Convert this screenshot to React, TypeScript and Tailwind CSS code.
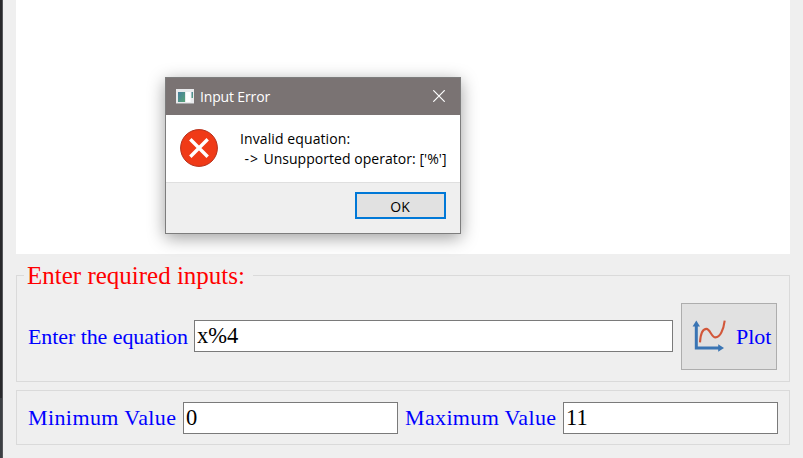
import React from "react";

function Field({ value, className }: { value: string; className: string }) {
  return (
    <input
      type="text"
      defaultValue={value}
      className={`h-8 rounded-none border border-[#7a7a7a] bg-white px-[2px] text-[22.5px] leading-none text-black outline-none ${className}`}
    />
  );
}

function PlotIcon() {
  return (
    <svg width="32" height="32" viewBox="0 0 32 32" fill="none" className="mb-[2px] shrink-0 overflow-visible">
      <path d="M4.3 6V28H27" stroke="#3a75b4" strokeWidth="3" />
      <path d="M4.3 0.5L8 6.5H0.6Z" fill="#3a75b4" />
      <path d="M32 28L26.2 31.7V24.3Z" fill="#3a75b4" />
      <path
        d="M8 22.4C8.5 14 11 8.9 14.5 8.9C18 8.9 19.5 17.4 23.5 17.4C28 17.4 31.5 10 32.7 .6"
        stroke="#d2573a"
        strokeWidth="2.1"
      />
    </svg>
  );
}

function AppIcon() {
  return (
    <svg width="18" height="15" viewBox="0 0 18 15">
      <defs>
        <linearGradient id="screen" x1="0" y1="0" x2="1" y2="1">
          <stop offset="0" stopColor="#477f9e" />
          <stop offset="1" stopColor="#58a477" />
        </linearGradient>
      </defs>
      <rect x="0" y="0" width="18" height="15" fill="#e9eaec" />
      <rect x="0" y="14" width="18" height="1" fill="#aaa9aa" />
      <rect x="2" y="3" width="7" height="10" fill="url(#screen)" />
      <rect x="10" y="3" width="4.5" height="10" fill="#fff" />
      <rect x="15.5" y="3" width="1.5" height="6" fill="url(#screen)" />
    </svg>
  );
}

function ErrorDialog() {
  return (
    <div
      role="dialog"
      className="absolute left-[165px] top-[77px] flex h-[157px] w-[296px] flex-col border border-[#7d7d7d] bg-white font-['Open_Sans',sans-serif] text-[14px] shadow-[0_4px_16px_rgba(0,0,0,0.38)]"
    >
      <div className="flex h-[37px] shrink-0 items-center bg-[#7a7373] pl-[10px] pr-[15px] text-white">
        <AppIcon />
        <span className="ml-[6px] grow whitespace-nowrap tracking-[-0.15px]">Input Error</span>
        <svg width="12" height="12" viewBox="0 0 12 12" stroke="white" strokeWidth="1.2" className="mb-px">
          <path d="M.3 .3L11.7 11.7M11.7 .3L.3 11.7" />
        </svg>
      </div>
      <div className="flex h-[67px] shrink-0 pl-[14px] pt-[14px] text-black">
        <svg width="38" height="38" viewBox="0 0 38 38" className="shrink-0">
          <circle cx="19" cy="19" r="18.4" fill="#f03a17" stroke="#b5301b" strokeWidth="1" />
          <path d="M10.3 10.3L27.7 27.7M27.7 10.3L10.3 27.7" stroke="white" strokeWidth="3.4" />
        </svg>
        <div className="ml-[22px] whitespace-pre leading-[20px]">
          <div className="tracking-[0.1px]">Invalid equation:</div>
          <div className="tracking-[0.04px]">
            <span className="tracking-[0.9px]">{" -> "}</span>
            {"Unsupported operator: ['%']"}
          </div>
        </div>
      </div>
      <div className="flex grow justify-end border-t border-[#dfdfdf] bg-[#efefef] pr-[14px] pt-[9px]">
        <button className="flex h-[27px] w-[91px] items-center justify-center border-2 border-[#0078d7] bg-[#e1e1e1] pr-px pt-px text-black">
          OK
        </button>
      </div>
    </div>
  );
}

export default function App() {
  return (
    <div className="relative flex h-[458px] w-[803px] overflow-hidden bg-[#efefef] font-['Liberation_Serif',serif]">
      <div className="flex w-[3px] shrink-0 flex-col border-r border-[#55565a] bg-[#28282b]">
        <div className="h-[398px]" />
        <div className="grow bg-[#3c3f43]" />
      </div>
      <main className="flex w-[787px] flex-col pl-[13px]">
        <div className="h-[254px] shrink-0 bg-white" />
        <section className="mt-[21px] flex h-[107px] shrink-0 flex-col border border-[#dadada]">
          <h2 className="-mt-[14px] ml-[7px] h-[27px] w-[229px] bg-[#efefef] pl-[3px] text-[25px] leading-[27px] whitespace-nowrap text-[#ff0000]">
            Enter required inputs:
          </h2>
          <div className="mt-[14px] flex h-[67px] items-center pl-[11px] pr-[12px]">
            <label className="w-[166px] whitespace-nowrap pb-px text-[22px] tracking-[-0.08px] text-[#0000ff]">
              Enter the equation
            </label>
            <Field value="x%4" className="mb-px w-[479px]" />
            <button className="ml-2 flex h-[67px] w-[96px] items-center border border-[#adadad] bg-[#e1e1e1] pl-[10px]">
              <PlotIcon />
              <span className="ml-[12px] pb-px text-[22px] text-[#0000ff]">Plot</span>
            </button>
          </div>
        </section>
        <section className="mt-2 flex h-[55px] shrink-0 items-center border border-[#dadada] pl-[11px] pr-[11px]">
          <label className="w-[155px] whitespace-nowrap pb-px text-[22px] tracking-[0.4px] text-[#0000ff]">
            Minimum Value
          </label>
          <Field value="0" className="w-[215px]" />
          <label className="ml-[7px] w-[158px] whitespace-nowrap pb-px text-[22px] tracking-[0.35px] text-[#0000ff]">
            Maximum Value
          </label>
          <Field value="11" className="w-[215px]" />
        </section>
      </main>
      <ErrorDialog />
    </div>
  );
}
